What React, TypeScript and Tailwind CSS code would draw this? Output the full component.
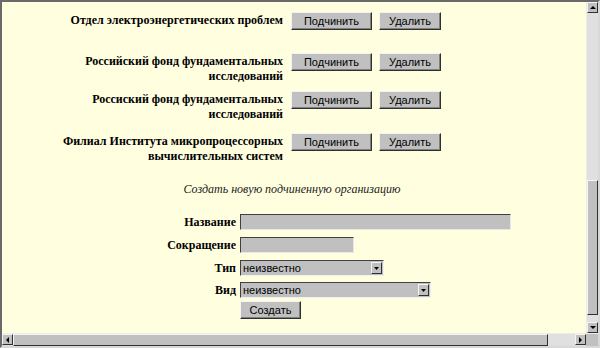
import React from 'react'

const serif = { fontFamily: '"Liberation Serif", "Times New Roman", serif' }
const sans = { fontFamily: '"Liberation Sans", Arial, sans-serif' }

function Btn({ label, w }: { label: string; w: string }) {
  return (
    <div
      className={`${w} h-[18px] flex items-center justify-center bg-[#c0c0c0] border border-t-[#f4f4f4] border-l-[#f4f4f4] border-r-[#303030] border-b-[#303030] shadow-[inset_-1px_-1px_0_#808080] text-[11px] text-black leading-none`}
      style={sans}
    >
      {label}
    </div>
  )
}

function Arrow({ dir }: { dir: 'up' | 'down' | 'left' | 'right' }) {
  const pts = {
    up: '1,5 4,2 7,5',
    down: '1,2 4,5 7,2',
    left: '5,1 2,4 5,7',
    right: '2,1 5,4 2,7',
  }[dir]
  return (
    <div className="w-[11px] h-[11px] shrink-0 flex items-center justify-center bg-[#c0c0c0] border border-t-[#f4f4f4] border-l-[#f4f4f4] border-r-[#303030] border-b-[#303030]">
      <svg width="8" height="8" viewBox="0 0 8 8">
        <polygon points={pts} fill="#000" />
      </svg>
    </div>
  )
}

const orgs = [
  { lines: ['Отдел электроэнергетических проблем'], h: 'h-[41px]' },
  { lines: ['Российский фонд фундаментальных', 'исследований'], h: 'h-[38px]' },
  { lines: ['Россиский фонд фундаментальных', 'исследований'], h: 'h-[42px]' },
  { lines: ['Филиал Института микропроцессорных', 'вычислительных систем'], h: 'h-[48px]' },
]

function Select({ w }: { w: string }) {
  return (
    <div className={`${w} h-[16px] flex items-center bg-[#c0c0c0] border border-t-[#404040] border-l-[#404040] border-r-[#f0f0f0] border-b-[#f0f0f0]`}>
      <span className="flex-1 pl-[2px] text-[11px] leading-none text-black" style={sans}>
        неизвестно
      </span>
      <div className="w-[11px] h-[12px] mr-[1px] flex items-center justify-center bg-[#c0c0c0] border border-t-[#f4f4f4] border-l-[#f4f4f4] border-r-[#303030] border-b-[#303030]">
        <svg width="7" height="5" viewBox="0 0 7 5">
          <polygon points="1,1 6,1 3.5,4" fill="#000" />
        </svg>
      </div>
    </div>
  )
}

function Input({ w }: { w: string }) {
  return (
    <div className={`${w} h-[16px] bg-[#c0c0c0] border border-t-[#404040] border-l-[#404040] border-r-[#e8e8e8] border-b-[#e8e8e8]`} />
  )
}

function FormRow({ label, mt, children }: { label: string; mt: string; children: React.ReactNode }) {
  return (
    <div className={`flex items-center ${mt}`}>
      <div className="w-[234px] text-right font-bold text-[12px] leading-[15px] text-black whitespace-nowrap" style={serif}>
        {label}
      </div>
      <div className="ml-[4px]">{children}</div>
    </div>
  )
}

export default function App() {
  return (
    <div className="w-[600px] h-[348px] flex flex-col bg-[#c0c0c0] border-t-2 border-l-2 border-r-2 border-b-2 border-t-[#6a6a6a] border-l-[#6a6a6a] border-r-[#d8d8d8] border-b-[#d8d8d8] overflow-hidden">
      <div className="flex flex-1 min-h-0">
        <div className="flex-1 bg-[#ffffe0] flex flex-col pt-[10px]">
          {orgs.map((o, i) => (
            <div key={i} className={`flex items-start ${o.h}`}>
              <div className="w-[281px] pt-[1px] text-right font-bold text-[12px] leading-[15px] text-black whitespace-nowrap" style={serif}>
                {o.lines.map((l, j) => (
                  <div key={j}>{l}</div>
                ))}
              </div>
              <div className="ml-[8px] flex gap-[7px]">
                <Btn label="Подчинить" w="w-[81px]" />
                <Btn label="Удалить" w="w-[62px]" />
              </div>
            </div>
          ))}
          <div className="w-[580px] mt-[1px] text-center italic text-[12px] leading-[15px] text-[#222]" style={serif}>
            Создать новую подчиненную организацию
          </div>
          <FormRow label="Название" mt="mt-[17px]">
            <Input w="w-[271px]" />
          </FormRow>
          <FormRow label="Сокращение" mt="mt-[7px]">
            <Input w="w-[114px]" />
          </FormRow>
          <FormRow label="Тип" mt="mt-[7px]">
            <Select w="w-[144px]" />
          </FormRow>
          <FormRow label="Вид" mt="mt-[6px]">
            <Select w="w-[191px]" />
          </FormRow>
          <div className="flex mt-[3px]">
            <div className="w-[238px]" />
            <div
              className="w-[61px] h-[18px] flex items-center justify-center bg-[#c0c0c0] border border-t-[#f4f4f4] border-l-[#f4f4f4] border-r-[#303030] border-b-[#303030] shadow-[inset_-1px_-1px_0_#808080] text-[11px] text-black leading-none"
              style={sans}
            >
              Создать
            </div>
          </div>
        </div>
        <div className="w-[12px] flex flex-col bg-[#e0e0e0] border-l border-l-[#ececec]">
          <Arrow dir="up" />
          <div className="h-[167px] bg-[#e0e0e0]" />
          <div className="h-[135px] bg-[#c0c0c0] border border-t-[#f4f4f4] border-l-[#f4f4f4] border-r-[#303030] border-b-[#303030]" />
          <div className="flex-1 bg-[#e0e0e0]" />
          <Arrow dir="down" />
        </div>
      </div>
      <div className="h-[13px] flex bg-[#e0e0e0] border-t border-t-[#ececec]">
        <Arrow dir="left" />
        <div className="w-[535px] bg-[#c0c0c0] border border-t-[#f4f4f4] border-l-[#f4f4f4] border-r-[#303030] border-b-[#303030]" />
        <div className="flex-1 bg-[#e0e0e0]" />
        <Arrow dir="right" />
        <div className="w-[12px] bg-[#c0c0c0]" />
      </div>
    </div>
  )
}
